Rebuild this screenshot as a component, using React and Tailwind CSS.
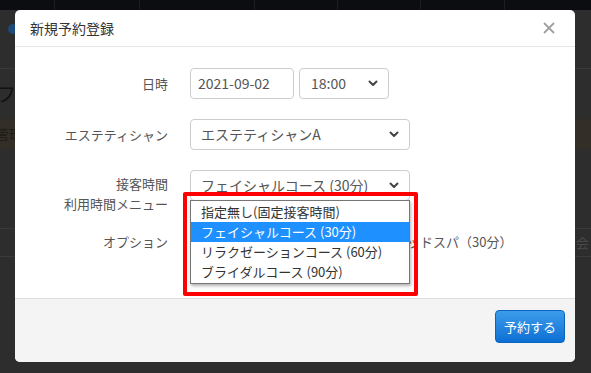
import React from 'react'

const jp = { fontFamily: '"Noto Sans CJK JP", "Noto Sans", sans-serif' }

const Chevron = () => (
  <svg width="10" height="7" viewBox="0 0 10 7" className="shrink-0">
    <path d="M1.5 1.5 L5 5 L8.5 1.5" fill="none" stroke="#444" strokeWidth="2" strokeLinecap="round" strokeLinejoin="round" />
  </svg>
)

const Select = ({ value, className }) => (
  <div className={`flex items-center justify-between h-[31px] border border-[#ccc] rounded-[4px] bg-white pl-[10px] pr-[10px] text-[14px] text-[#555] ${className}`}>
    <span>{value}</span>
    <Chevron />
  </div>
)

const Label = ({ children }) => (
  <div className="w-[153px] shrink-0 text-right text-[13px] text-[#555] leading-[20px]">{children}</div>
)

const options = ['指定無し(固定接客時間)', 'フェイシャルコース (30分)', 'リラクゼーションコース (60分)', 'ブライダルコース (90分)']

export default function App() {
  return (
    <div className="relative w-[591px] h-[373px] overflow-hidden bg-[#2d2d2d]" style={jp}>
      {/* page behind the overlay */}
      <div className="flex flex-col">
        <div className="h-[10px] bg-[#0b0d10] flex">
          <div className="w-[55px] border-r border-[#1c1e21]" />
          <div className="w-[85px] border-r border-[#1c1e21]" />
          <div className="w-[115px] border-r border-[#1c1e21]" />
          <div className="w-[83px] border-r border-[#1c1e21]" />
          <div className="w-[83px] border-r border-[#1c1e21]" />
          <div className="w-[84px] border-r border-[#1c1e21]" />
        </div>
        <div className="h-[59px] border-b border-[#3a3a3a] flex items-center pl-[8px]">
          <div className="w-[10px] h-[10px] rounded-full bg-[#1d4a78] -mt-[20px]" />
        </div>
        <div className="h-[50px] flex items-center text-[20px] text-[#111] -ml-[4px]">フ</div>
        <div className="h-[30px] bg-[#332f28] flex items-center text-[13px] text-[#1d1a14] -ml-[4px]">管理</div>
        <div className="h-[79px]" />
        <div className="h-[29px] border-y border-[#3a3a3a] flex items-center justify-end pr-[2px] text-[13px] text-[#4a4a4a]">会</div>
      </div>

      {/* modal */}
      <div className="absolute left-[15px] top-[10px] w-[560px] h-[352px] bg-white rounded-[5px] overflow-hidden flex flex-col">
        <div className="h-[37px] border-b border-[#e5e5e5] flex items-center justify-between pl-[15px] pr-[20px]">
          <span className="text-[14px] text-[#333]">新規予約登録</span>
          <svg width="12" height="12" viewBox="0 0 12 12">
            <path d="M1 1 L11 11 M11 1 L1 11" stroke="#a0a0a0" strokeWidth="1.8" />
          </svg>
        </div>

        <div className="flex-1 relative flex flex-col pt-[21px]">
          <div className="flex items-center gap-[22px] h-[31px]">
            <Label>日時</Label>
            <div className="w-[104px] h-[31px] border border-[#ccc] rounded-[4px] flex items-center pl-[7px] text-[14px] text-[#555]">2021-09-02</div>
            <Select value="18:00" className="w-[90px] -ml-[17px] pl-[11px]" />
          </div>
          <div className="flex items-center gap-[22px] h-[31px] mt-[20px]">
            <Label>エステティシャン</Label>
            <Select value="エステティシャンA" className="w-[220px]" />
          </div>
          <div className="flex items-start gap-[22px] mt-[20px]">
            <div className="pt-[4px]">
              <Label>接客時間<br />利用時間メニュー</Label>
            </div>
            <Select value="フェイシャルコース (30分)" className="w-[220px]" />
          </div>
          <div className="flex items-center gap-[22px] h-[30px] mt-[13px]">
            <Label>オプション</Label>
            <div className="flex items-center gap-[6px] text-[13px] text-[#555] pl-[186px]">
              <span className="w-[12px] h-[12px] border border-[#888] rounded-[2px]" />
              <span>ヘッドスパ（30分）</span>
            </div>
          </div>

          {/* open dropdown */}
          <div className="absolute left-[168px] top-[145px] w-[235px] h-[104px] border-[4px] border-[#ff0000] rounded-[2px]" />
          <div className="absolute left-[175px] top-[153px] w-[220px] border border-[#767676] bg-white py-[1px] shadow-[1px_2px_3px_rgba(0,0,0,0.3)]">
            {options.map((o, i) => (
              <div key={o} className={`h-[20px] leading-[20px] pl-[10px] text-[13px] ${i === 1 ? 'bg-[#1e90ff] text-white' : 'text-[#333]'}`}>{o}</div>
            ))}
          </div>
        </div>

        <div className="h-[64px] bg-[#f4f4f4] border-t border-[#ddd] flex justify-end items-start pt-[11px] pr-[10px]">
          <button className="w-[70px] h-[33px] rounded-[4px] border border-[#0a64c0] bg-gradient-to-b from-[#3b9ceb] to-[#0b6fd3] text-white text-[13px]">予約する</button>
        </div>
      </div>
    </div>
  )
}
